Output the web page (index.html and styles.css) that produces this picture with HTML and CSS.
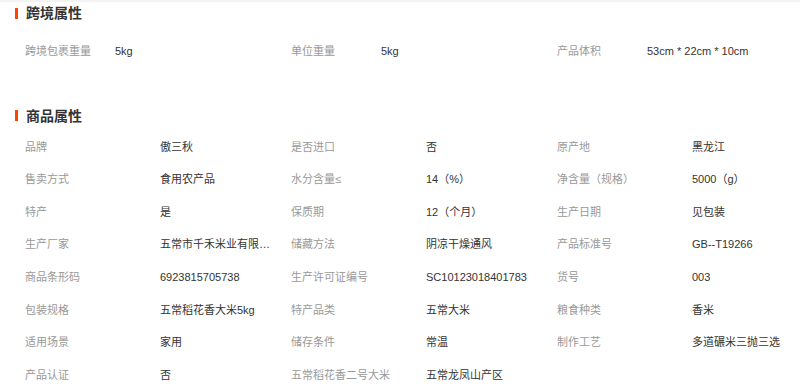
FILE: index.html
```html
<!DOCTYPE html>
<html lang="zh">
<head>
<meta charset="utf-8">
<title>商品属性</title>
<link rel="stylesheet" href="styles.css">
</head>
<body>
<div class="topbar"></div>

<section class="section">
  <h2 class="title"><span class="mark"></span>跨境属性</h2>
  <div class="props props-cross">
    <div class="k">跨境包裹重量</div><div class="v">5kg</div>
    <div class="k">单位重量</div><div class="v">5kg</div>
    <div class="k">产品体积</div><div class="v">53cm * 22cm * 10cm</div>
  </div>
</section>

<section class="section section-goods">
  <h2 class="title"><span class="mark"></span>商品属性</h2>
  <div class="props props-goods">
    <div class="k">品牌</div><div class="v">傲三秋</div>
    <div class="k">是否进口</div><div class="v">否</div>
    <div class="k">原产地</div><div class="v">黑龙江</div>

    <div class="k">售卖方式</div><div class="v">食用农产品</div>
    <div class="k">水分含量≤</div><div class="v">14（%）</div>
    <div class="k">净含量（规格）</div><div class="v">5000（g）</div>

    <div class="k">特产</div><div class="v">是</div>
    <div class="k">保质期</div><div class="v">12（个月）</div>
    <div class="k">生产日期</div><div class="v">见包装</div>

    <div class="k">生产厂家</div><div class="v">五常市千禾米业有限公司</div>
    <div class="k">储藏方法</div><div class="v">阴凉干燥通风</div>
    <div class="k">产品标准号</div><div class="v">GB--T19266</div>

    <div class="k">商品条形码</div><div class="v">6923815705738</div>
    <div class="k">生产许可证编号</div><div class="v">SC10123018401783</div>
    <div class="k">货号</div><div class="v">003</div>

    <div class="k">包装规格</div><div class="v">五常稻花香大米5kg</div>
    <div class="k">特产品类</div><div class="v">五常大米</div>
    <div class="k">粮食种类</div><div class="v">香米</div>

    <div class="k">适用场景</div><div class="v">家用</div>
    <div class="k">储存条件</div><div class="v">常温</div>
    <div class="k">制作工艺</div><div class="v">多道碾米三抛三选</div>

    <div class="k">产品认证</div><div class="v">否</div>
    <div class="k">五常稻花香二号大米</div><div class="v">五常龙凤山产区</div>
  </div>
</section>
</body>
</html>
```

FILE: styles.css
```css
html, body {
  margin: 0;
  padding: 0;
  background: #fff;
  overflow: hidden;
}

body {
  font-family: "Liberation Sans", "Noto Sans CJK SC", sans-serif;
  font-size: 11px;
  color: #333;
}

.topbar {
  height: 2px;
  background: #f3f3f3;
}

.title {
  display: flex;
  align-items: center;
  gap: 8px;
  margin: 2px 0 0 15px;
  height: 18px;
  line-height: 18px;
  font-size: 14px;
  font-weight: bold;
  color: #333;
}

.mark {
  width: 3px;
  height: 11px;
  background: #ff4400;
}

.props {
  display: grid;
  padding-left: 25px;
  grid-auto-rows: 32.6px;
  margin-top: 13px;
}

.props-cross {
  grid-template-columns: 90px 176px 90px 176px 90px 1fr;
}

.section-goods .title {
  margin-top: 39px;
}

.props-goods {
  margin-top: 6px;
  grid-template-columns: 135px 131px 135px 131px 135px 1fr;
}

.k, .v {
  line-height: 32.6px;
  white-space: nowrap;
  overflow: hidden;
  text-overflow: ellipsis;
}

.k {
  color: #999;
}

.v {
  color: #333;
  padding-right: 20px;
}
```
